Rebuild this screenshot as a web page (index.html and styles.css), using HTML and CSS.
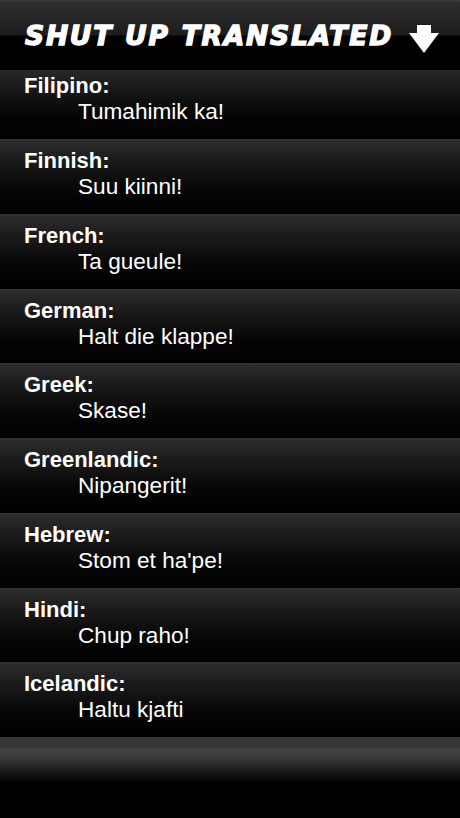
FILE: index.html
```html
<!DOCTYPE html>
<html>
<head>
<meta charset="utf-8">
<link rel="stylesheet" href="styles.css">
</head>
<body>
<div class="app">
  <header class="header">
    <h1 class="title">SHUT UP TRANSLATED</h1>
    <svg class="arrow" width="30" height="28" viewBox="0 0 30 28"><path d="M8 0 H22 V8 H30 L15 28 L0 8 H8 Z" fill="#fff"/></svg>
  </header>
  <ul class="list">
    <li class="row"><div class="lang">Filipino:</div><div class="phrase">Tumahimik ka!</div></li>
    <li class="row"><div class="lang">Finnish:</div><div class="phrase">Suu kiinni!</div></li>
    <li class="row"><div class="lang">French:</div><div class="phrase">Ta gueule!</div></li>
    <li class="row"><div class="lang">German:</div><div class="phrase">Halt die klappe!</div></li>
    <li class="row"><div class="lang">Greek:</div><div class="phrase">Skase!</div></li>
    <li class="row"><div class="lang">Greenlandic:</div><div class="phrase">Nipangerit!</div></li>
    <li class="row"><div class="lang">Hebrew:</div><div class="phrase">Stom et ha'pe!</div></li>
    <li class="row"><div class="lang">Hindi:</div><div class="phrase">Chup raho!</div></li>
    <li class="row"><div class="lang">Icelandic:</div><div class="phrase">Haltu kjafti</div></li>
  </ul>
  <footer class="footer"></footer>
</div>
</body>
</html>
```
FILE: styles.css
```css
html, body {
  margin: 0;
  padding: 0;
  background: #000;
}
.app {
  width: 460px;
  height: 818px;
  overflow: hidden;
  display: flex;
  flex-direction: column;
  font-family: "Liberation Sans", Arial, sans-serif;
  color: #fff;
}
.header {
  position: relative;
  z-index: 1;
  height: 70px;
  flex: none;
  display: flex;
  align-items: center;
  justify-content: space-between;
  padding: 0 21px 0 25px;
  box-sizing: border-box;
  background: linear-gradient(to bottom, #3c3c3c 0px, #2e2e2e 3px, #1c1c1c 35px, #000 36px, #000 100%);
}
.title {
  margin: 0;
  font-family: "DejaVu Sans", "Liberation Sans", sans-serif;
  font-size: 26.5px;
  font-weight: bold;
  font-style: italic;
  letter-spacing: 1.8px;
  word-spacing: 1px;
  -webkit-text-stroke: 1.4px #fff;
  line-height: 1;
  padding-top: 3px;
  white-space: nowrap;
}
.arrow {
  display: block;
  margin-top: 8px;
}
.list {
  list-style: none;
  margin: -5.75px 0 0 0;
  padding: 0;
  flex: none;
}
.row {
  height: 74.75px;
  box-sizing: border-box;
  padding: 10px 0 0 24px;
  background: linear-gradient(to bottom, #343434 0px, #2b2b2b 3px, #1a1a1a 30%, #060606 68%, #000 100%);
}
.lang {
  font-weight: bold;
  font-size: 22px;
  line-height: 24px;
}
.phrase {
  font-size: 22.6px;
  line-height: 26px;
  padding-left: 54px;
  margin-top: 1px;
}
.footer {
  flex: 1;
  background: linear-gradient(to bottom, #363636 0px, #363636 11px, #444 11px, #3c3c3c 20px, #111 38px, #000 46px, #000 100%);
}
```
